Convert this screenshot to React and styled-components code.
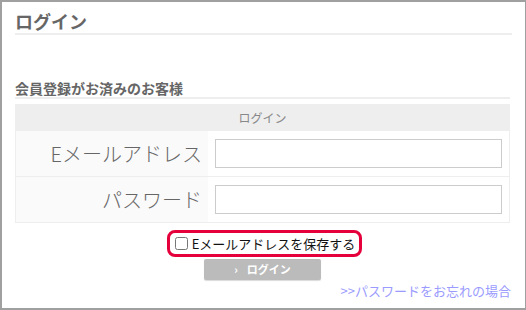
import styled, { createGlobalStyle } from 'styled-components';

const GlobalStyle = createGlobalStyle`
    html, body {
        margin: 0;
        padding: 0;
        background: #fff;
    }
    body {
        font-family: "Noto Sans CJK JP", "Noto Sans", sans-serif;
    }
`

const Frame = styled.div`
    box-sizing: border-box;
    width: 526px;
    height: 310px;
    border: 2px solid #a0a0a0;
    border-right-width: 1px;
    padding: 0 15px 0 13px;
    overflow: hidden;
`

const Title = styled.h2`
    margin: 0 -2px 0 0;
    padding-top: 7px;
    height: 24px;
    font-size: 18px;
    line-height: 24px;
    font-weight: bold;
    color: #666;
    border-bottom: 2px solid #eee;
`

const SectionTitle = styled.h3`
    margin: 45px 0 0 0;
    height: 17px;
    font-size: 14px;
    line-height: 17px;
    font-weight: bold;
    color: #666;
    border-bottom: 2px solid #eee;
`

const Table = styled.table`
    margin-top: 5px;
    width: 495px;
    border-collapse: collapse;
    border: 1px solid #eee;
`

const HeadCell = styled.th`
    height: 25px;
    padding: 0;
    background: #eee;
    color: #888;
    font-size: 12px;
    font-weight: normal;
    text-align: center;
`

const LabelCell = styled.th`
    width: 186px;
    height: 45px;
    padding: 0 6px 0 0;
    background: #fafafa;
    border-top: 1px solid #eee;
    color: #666;
    font-size: 20px;
    font-weight: 300;
    text-align: right;
    white-space: nowrap;
`

const FieldCell = styled.td`
    padding: 0 7px;
    background: #fff;
    border-top: 1px solid #eee;
`

const Field = styled.input`
    display: block;
    box-sizing: border-box;
    width: 287px;
    height: 29px;
    margin: 0;
    border: 1px solid #ccc;
    background: #fff;
`

const SaveRow = styled.div`
    display: flex;
    justify-content: center;
    margin-top: 7px;
    padding-left: 4px;
`

const SaveBox = styled.label`
    display: flex;
    align-items: center;
    box-sizing: border-box;
    height: 27px;
    padding: 0 4px 0 5px;
    border: 3px solid #e5003b;
    border-radius: 8px;
    font-size: 13px;
    color: #111;
    gap: 2px;
`

const Check = styled.input`
    width: 13px;
    height: 13px;
    margin: 0 2px 0 0;
`

const ButtonRow = styled.div`
    display: flex;
    justify-content: center;
    margin-top: 2px;
`

const LoginButton = styled.button`
    width: 117px;
    height: 21px;
    padding: 0;
    border: none;
    border-radius: 2px;
    background: #bbb;
    box-shadow: 0 1px 1px rgba(0, 0, 0, 0.15);
    color: #fff;
    font-family: "Noto Sans CJK JP", sans-serif;
    font-size: 11px;
    font-weight: bold;
    line-height: 21px;
    word-spacing: 2px;
`

const Forgot = styled.a`
    display: block;
    margin-top: 3px;
    width: 496px;
    text-align: right;
    color: #9b9bff;
    font-size: 13px;
    line-height: 16px;
    text-decoration: none;
`

export default function App() {
    return (
        <>
            <GlobalStyle />
            <Frame>
                <Title>ログイン</Title>
                <SectionTitle>会員登録がお済みのお客様</SectionTitle>
                <Table>
                    <thead>
                        <tr>
                            <HeadCell colSpan={2}>ログイン</HeadCell>
                        </tr>
                    </thead>
                    <tbody>
                        <tr>
                            <LabelCell>Eメールアドレス</LabelCell>
                            <FieldCell><Field type="text" /></FieldCell>
                        </tr>
                        <tr>
                            <LabelCell>パスワード</LabelCell>
                            <FieldCell><Field type="password" /></FieldCell>
                        </tr>
                    </tbody>
                </Table>
                <SaveRow>
                    <SaveBox>
                        <Check type="checkbox" />
                        Eメールアドレスを保存する
                    </SaveBox>
                </SaveRow>
                <ButtonRow>
                    <LoginButton>›&nbsp; ログイン</LoginButton>
                </ButtonRow>
                <Forgot href="#">&gt;&gt;パスワードをお忘れの場合</Forgot>
            </Frame>
        </>
    )
}
